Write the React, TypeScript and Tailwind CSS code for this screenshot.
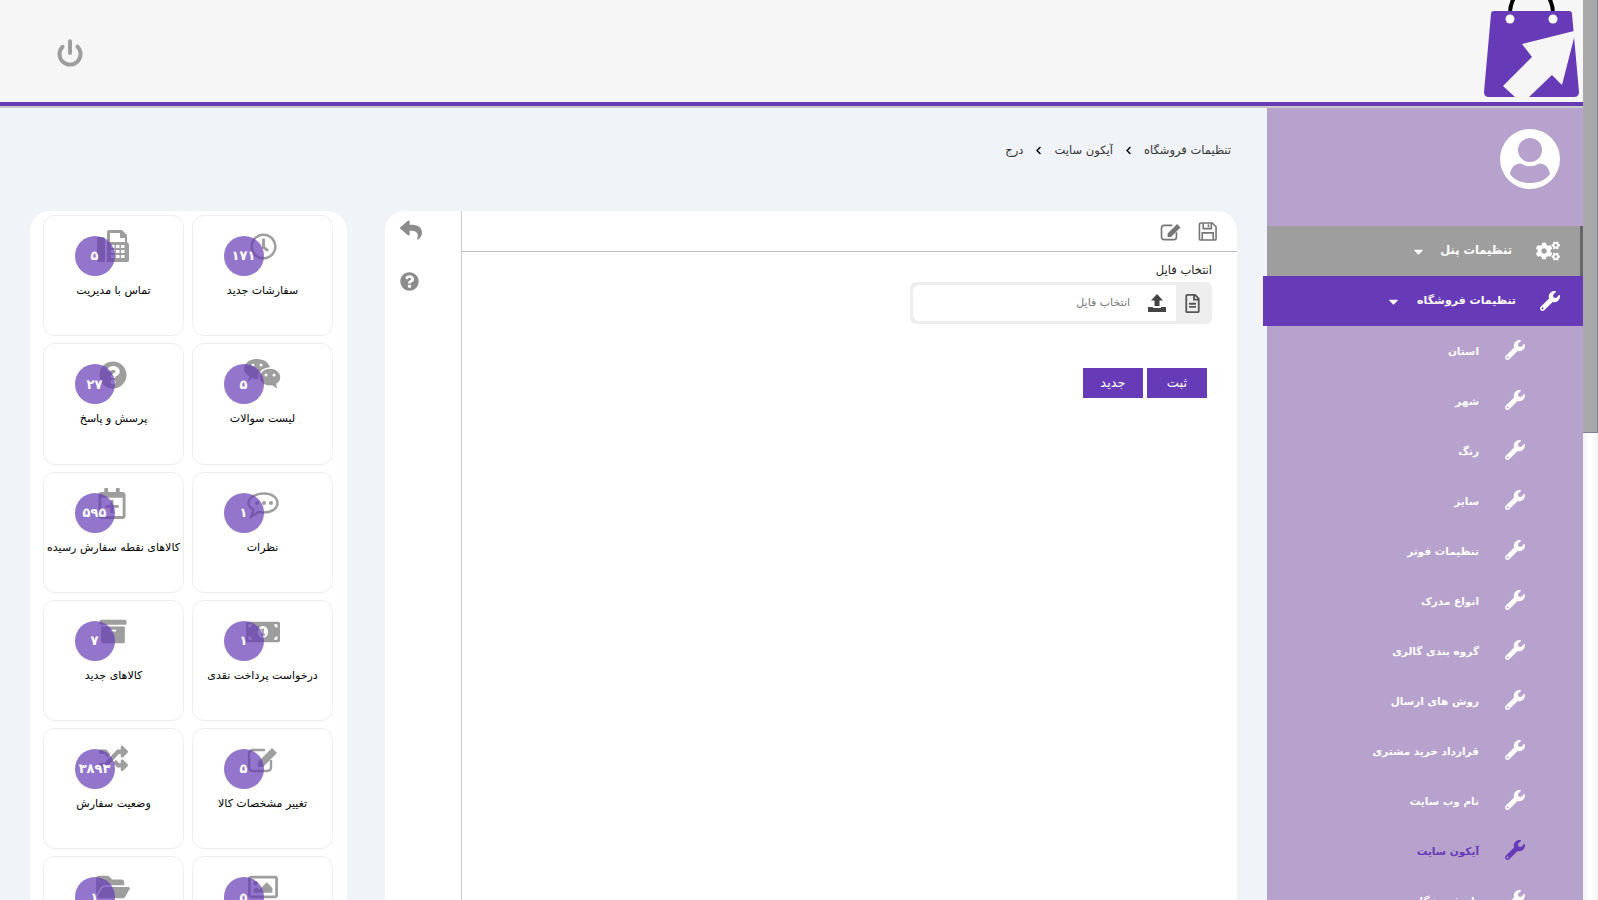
import React from "react";
import {
  FaCogs,
  FaWrench,
  FaRegClock,
  FaQuestionCircle,
  FaRegCalendarPlus,
  FaMoneyBillAlt,
  FaArchive,
  FaRandom,
  FaRegImage,
  FaFolderOpen,
  FaReply,
  FaRegFileAlt,
  FaCaretDown,
  FaChevronLeft,
} from "react-icons/fa";
import { Power } from "lucide-react";

const font = { fontFamily: '"DejaVu Sans", "Noto Sans", sans-serif' };

const FaxIcon = ({ className }: { className?: string }) => (
  <svg viewBox="0 0 32 32" className={className} fill="currentColor">
    <rect x="0" y="7" width="8" height="25" rx="2" />
    <path d="M10 2 Q10 0 12 0 H25 L30 5 V12 Q32 13 32 15 V30 Q32 32 30 32 H10 Z" />
    <path d="M13 3 H23 V8 H28 V12 H13 Z" fill="#fff" />
    <g fill="#fff">
      <rect x="14" y="15" width="3.5" height="3" />
      <rect x="19" y="15" width="3.5" height="3" />
      <rect x="24" y="15" width="3.5" height="3" />
      <rect x="14" y="20" width="3.5" height="3" />
      <rect x="19" y="20" width="3.5" height="3" />
      <rect x="24" y="20" width="3.5" height="3" />
      <rect x="14" y="25" width="3.5" height="3" />
      <rect x="19" y="25" width="3.5" height="3" />
      <rect x="24" y="25" width="3.5" height="3" />
    </g>
  </svg>
);

const BubblesIcon = ({ className }: { className?: string }) => (
  <svg viewBox="0 0 37 31" className={className} fill="currentColor">
    <path d="M13 0 C20 0 26 4 26 10 C26 16 20 20 13 20 C11 20 10 20 8 19 L4 23 L5 17 C2 15 0 13 0 10 C0 4 6 0 13 0 Z" />
    <path d="M26 9 C32 9 37 13 37 18 C37 21 35 24 33 25 L34 31 L28 27 C21 28 15 24 15 18 C15 13 20 9 26 9 Z" stroke="#fff" strokeWidth="1.5" />
    <circle cx="9" cy="6" r="1.5" fill="#fff" />
    <circle cx="17" cy="6" r="1.5" fill="#fff" />
    <circle cx="22" cy="16" r="1.5" fill="#fff" />
    <circle cx="30" cy="16" r="1.5" fill="#fff" />
  </svg>
);

const CommentIcon = ({ className }: { className?: string }) => (
  <svg viewBox="0 0 32 27" className={className} fill="none" stroke="currentColor">
    <path d="M17 1.5 C25 1.5 30.5 5.5 30.5 11 C30.5 16.5 25 20.5 17 20.5 C15 20.5 13 20.3 11.5 19.8 L4 25 L6.5 17.5 C3.5 16 1.5 13.5 1.5 11 C1.5 5.5 9 1.5 17 1.5 Z" strokeWidth="2.4" />
    <circle cx="10" cy="11" r="2" fill="currentColor" stroke="none" />
    <circle cx="17" cy="11" r="2" fill="currentColor" stroke="none" />
    <circle cx="24" cy="11" r="2" fill="currentColor" stroke="none" />
  </svg>
);

const EditIcon = ({ className }: { className?: string }) => (
  <svg viewBox="0 0 32 28" className={className} fill="none" stroke="currentColor">
    <path d="M24 15 V22 Q24 26 20 26 H6 Q2 26 2 22 V9 Q2 5 6 5 H18" strokeWidth="2.4" />
    <path d="M11 17 L11 22 L16 22 L30 8 L25 3 Z" fill="currentColor" stroke="none" />
  </svg>
);

const SaveIcon = ({ className }: { className?: string }) => (
  <svg viewBox="0 0 20 20" className={className} fill="none" stroke="currentColor" strokeWidth="1.7">
    <path d="M1.5 2.5 Q1.5 1 3 1 H15 L19 5 V17.5 Q19 19 17.5 19 H3 Q1.5 19 1.5 17.5 Z" />
    <path d="M5.5 1 V7 H14 V1" />
    <path d="M4.5 19 V11.5 H16 V19" />
    <path d="M11 2.5 V5.5" />
  </svg>
);

const Logo = () => (
  <svg viewBox="0 0 98 102" className="w-[98px] h-[102px]">
    <path d="M26 14 C26 7 27 3 30 -2 M69 14 C69 7 68 3 65 -2" fill="none" stroke="#000" strokeWidth="4" />
    <path d="M7 14 Q7 11 10 11 L85 11 Q88 11 88 14 L95 92 Q95 97 90 97 L5 97 Q0 97 0 92 Z" fill="#673ab7" />
    <circle cx="26" cy="19" r="4.5" fill="#fff" />
    <circle cx="69" cy="19" r="4.5" fill="#fff" />
    <path d="M90 31 L38 44 L48 57 L19 86 L31 97 L45 97 L68 75 L78 85 L90 38 Z" fill="#f6f6f7" />
  </svg>
);

const Avatar = () => (
  <svg viewBox="0 0 60 60" className="w-[60px] h-[60px]">
    <circle cx="30" cy="30" r="30" fill="#fff" />
    <circle cx="30" cy="21" r="12" fill="#b7a1cd" />
    <path d="M10 45 C11 36 19 33 22 35 C26 38 34 38 38 35 C41 33 49 36 50 45 C45 52 37 54 30 54 C23 54 15 52 10 45 Z" fill="#b7a1cd" />
  </svg>
);

const UploadIcon = () => (
  <svg viewBox="0 0 18 18" className="w-[18px] h-[18px]" fill="#444">
    <path d="M9 0 L15 6.5 H11.5 V12 H6.5 V6.5 H3 Z" />
    <path d="M0 13 H5 V14 H13 V13 H18 V18 H0 Z" />
  </svg>
);

const cards: { label: string; count: string; icon: React.ReactNode }[] = [
  { label: "سفارشات جدید", count: "۱۷۱", icon: <FaRegClock className="absolute left-[27px] top-[-3px] w-[27px] h-[27px]" /> },
  { label: "تماس با مدیریت", count: "۵", icon: <FaxIcon className="absolute left-[23px] top-[-6px] w-[32px] h-[32px]" /> },
  { label: "لیست سوالات", count: "۵", icon: <BubblesIcon className="absolute left-[21px] top-[-5px] w-[37px] h-[31px]" /> },
  { label: "پرسش و پاسخ", count: "۲۷", icon: <FaQuestionCircle className="absolute left-[25px] top-[-3px] w-[28px] h-[28px]" /> },
  { label: "نظرات", count: "۱", icon: <CommentIcon className="absolute left-[24px] top-[-1px] w-[32px] h-[27px]" /> },
  { label: "کالاهای نقطه سفارش رسیده", count: "۵۹۵", icon: <FaRegCalendarPlus className="absolute left-[23px] top-[-5px] w-[30px] h-[31px]" /> },
  { label: "درخواست پرداخت نقدی", count: "۱", icon: <FaMoneyBillAlt className="absolute left-[23px] top-[-4px] w-[34px] h-[30px]" /> },
  { label: "کالاهای جدید", count: "۷", icon: <FaArchive className="absolute left-[24px] top-[-3px] w-[30px] h-[27px]" /> },
  { label: "تغییر مشخصات کالا", count: "۵", icon: <EditIcon className="absolute left-[24px] top-[-4px] w-[32px] h-[28px]" /> },
  { label: "وضعیت سفارش", count: "۳۸۹۳", icon: <FaRandom className="absolute left-[23px] top-[-5px] w-[33px] h-[29px]" /> },
  { label: "گالری تصاویر", count: "۵", icon: <FaRegImage className="absolute left-[23px] top-[-5px] w-[34px] h-[30px]" /> },
  { label: "مدیریت فایل", count: "۱", icon: <FaFolderOpen className="absolute left-[22px] top-[-5px] w-[34px] h-[30px]" /> },
];

const subItems = [
  "استان",
  "شهر",
  "رنگ",
  "سایز",
  "تنظیمات فوتر",
  "انواع مدرک",
  "گروه بندی گالری",
  "روش های ارسال",
  "قرارداد خرید مشتری",
  "نام وب سایت",
  "آیکون سایت",
  "نام فروشگاه",
];

const Card = ({ label, count, icon }: { label: string; count: string; icon: React.ReactNode }) => (
  <div className="h-[121.25px] rounded-xl border border-[#eeeeee] bg-white flex flex-col items-center pt-[20px]">
    <div className="relative w-[80px] h-[40px] shrink-0 text-[#9e9e9e]">
      {icon}
      <div className="absolute left-[1px] top-0 w-[40px] h-[40px] rounded-full bg-[#673ab7]/70 flex items-center justify-center text-white text-[13px] font-bold tracking-[1px]">
        {count}
      </div>
    </div>
    <div className="mt-[5px] text-[11px] leading-[20px] text-black whitespace-nowrap">{label}</div>
  </div>
);

const App = () => {
  return (
    <div dir="rtl" style={font} className="h-[900px] w-[1598px] overflow-hidden flex bg-[#f0f3f8]">
      {/* fake scrollbar */}
      <div className="w-[15px] h-full shrink-0 bg-gradient-to-r from-[#f4f4f4] via-white to-[#f4f4f4]">
        <div className="h-[433px] bg-[#a9a9a9] border-r border-b border-[#7f7f9a]" />
      </div>

      <div className="flex-1 min-w-0 flex flex-col">
        <header className="h-[106px] shrink-0 bg-[#f6f6f7] border-b-4 border-[#673ab7] flex items-start justify-between pr-[1px] pl-[56px] overflow-hidden">
          <Logo />
          <Power className="mt-[39px] text-[#9e9e9e]" size={28} strokeWidth={3.4} />
        </header>
        <div className="h-[2px] shrink-0 bg-[#c9c9c9]" />

        <div className="flex-1 min-h-0 flex">
          {/* sidebar */}
          <aside className="w-[316px] shrink-0 bg-[#b7a1cd] flex flex-col">
            <div className="h-[118px] shrink-0 flex items-start pt-[21px] pr-[23px]">
              <Avatar />
            </div>
            <div className="h-[50px] shrink-0 bg-[#9e9e9e] border-r-[3px] border-[#666] flex items-center pr-[20px] text-white text-[11.5px] font-bold">
              <FaCogs size={24} />
              <span className="mr-[24px]">تنظیمات پنل</span>
              <FaCaretDown className="mr-[14px]" size={15} />
            </div>
            <div className="h-[50px] shrink-0 bg-[#673ab7] -ml-[4px] flex items-center pr-[23px] text-white text-[11px] font-bold">
              <FaWrench size={20} />
              <span className="mr-[24px]">تنظیمات فروشگاه</span>
              <FaCaretDown className="mr-[16px]" size={15} />
            </div>
            {subItems.map((s, i) => (
              <div
                key={s}
                className={`h-[50px] shrink-0 flex items-center pr-[58px] text-[10.5px] font-bold ${
                  i === 10 ? "text-[#673ab7]" : "text-white"
                }`}
              >
                <FaWrench className="-mt-[3px]" size={20} />
                <span className="mr-[26px] mt-[1px]">{s}</span>
              </div>
            ))}
          </aside>

          {/* content */}
          <main className="flex-1 min-w-0 pr-[30px]">
            <div className="h-[103px] pt-[32px] pr-[6px] flex items-start gap-[11px] text-[11.5px] leading-[20px] text-[#333]">
              <span>تنظیمات فروشگاه</span>
              <FaChevronLeft className="mt-[6px] text-black" size={9} />
              <span>آیکون سایت</span>
              <FaChevronLeft className="mt-[6px] text-black" size={9} />
              <span>درج</span>
            </div>

            <div className="flex gap-[38px] pl-[30px]">
              <div className="w-[852px] h-[800px] shrink-0 bg-white rounded-t-[20px] flex">
                <div className="flex-1 border-l border-[#cccccc]">
                  <div className="h-[41px] border-b border-[#bdbdbd] flex items-center pr-[20px] gap-[16px] text-[#757575]">
                    <SaveIcon className="w-[19px] h-[19px]" />
                    <EditIcon className="w-[22px] h-[19px]" />
                  </div>
                  <div className="pr-[25px] pt-[8px]">
                    <div className="text-[11.5px] leading-[20px] text-[#222]">انتخاب فایل</div>
                    <div className="w-[302px] h-[42px] mt-[2px] rounded-md bg-[#eeeeee] flex items-center overflow-hidden p-[3px]">
                      <div className="w-[33px] flex justify-center text-[#555]">
                        <FaRegFileAlt size={19} />
                      </div>
                      <div className="flex-1 h-full bg-white rounded-l-md flex items-center pr-[10px] gap-[18px] text-[11px] text-[#777]">
                        <UploadIcon />
                        <span>انتخاب فایل</span>
                      </div>
                    </div>
                    <div className="mt-[44px] mr-[5px] flex gap-[4px]">
                      <button className="w-[60px] h-[30px] bg-[#673ab7] text-white text-[13px]">ثبت</button>
                      <button className="w-[60px] h-[30px] bg-[#673ab7] text-white text-[13px]">جدید</button>
                    </div>
                  </div>
                </div>
                <div className="w-[76px] shrink-0 flex flex-col items-end pl-[15px] pt-[8px] text-[#8c8c8c]">
                  <FaReply size={22} />
                  <FaQuestionCircle className="mt-[31px]" size={19} />
                </div>
              </div>

              <div className="w-[317px] h-[800px] shrink-0 bg-white rounded-t-[20px] pr-[14px] pl-[13px] pt-[4px]">
                <div className="grid grid-cols-2 gap-x-[8px] gap-y-[7px]">
                  {cards.map((c) => (
                    <Card key={c.label} {...c} />
                  ))}
                </div>
              </div>
            </div>
          </main>
        </div>
      </div>
    </div>
  );
};

export default App;
